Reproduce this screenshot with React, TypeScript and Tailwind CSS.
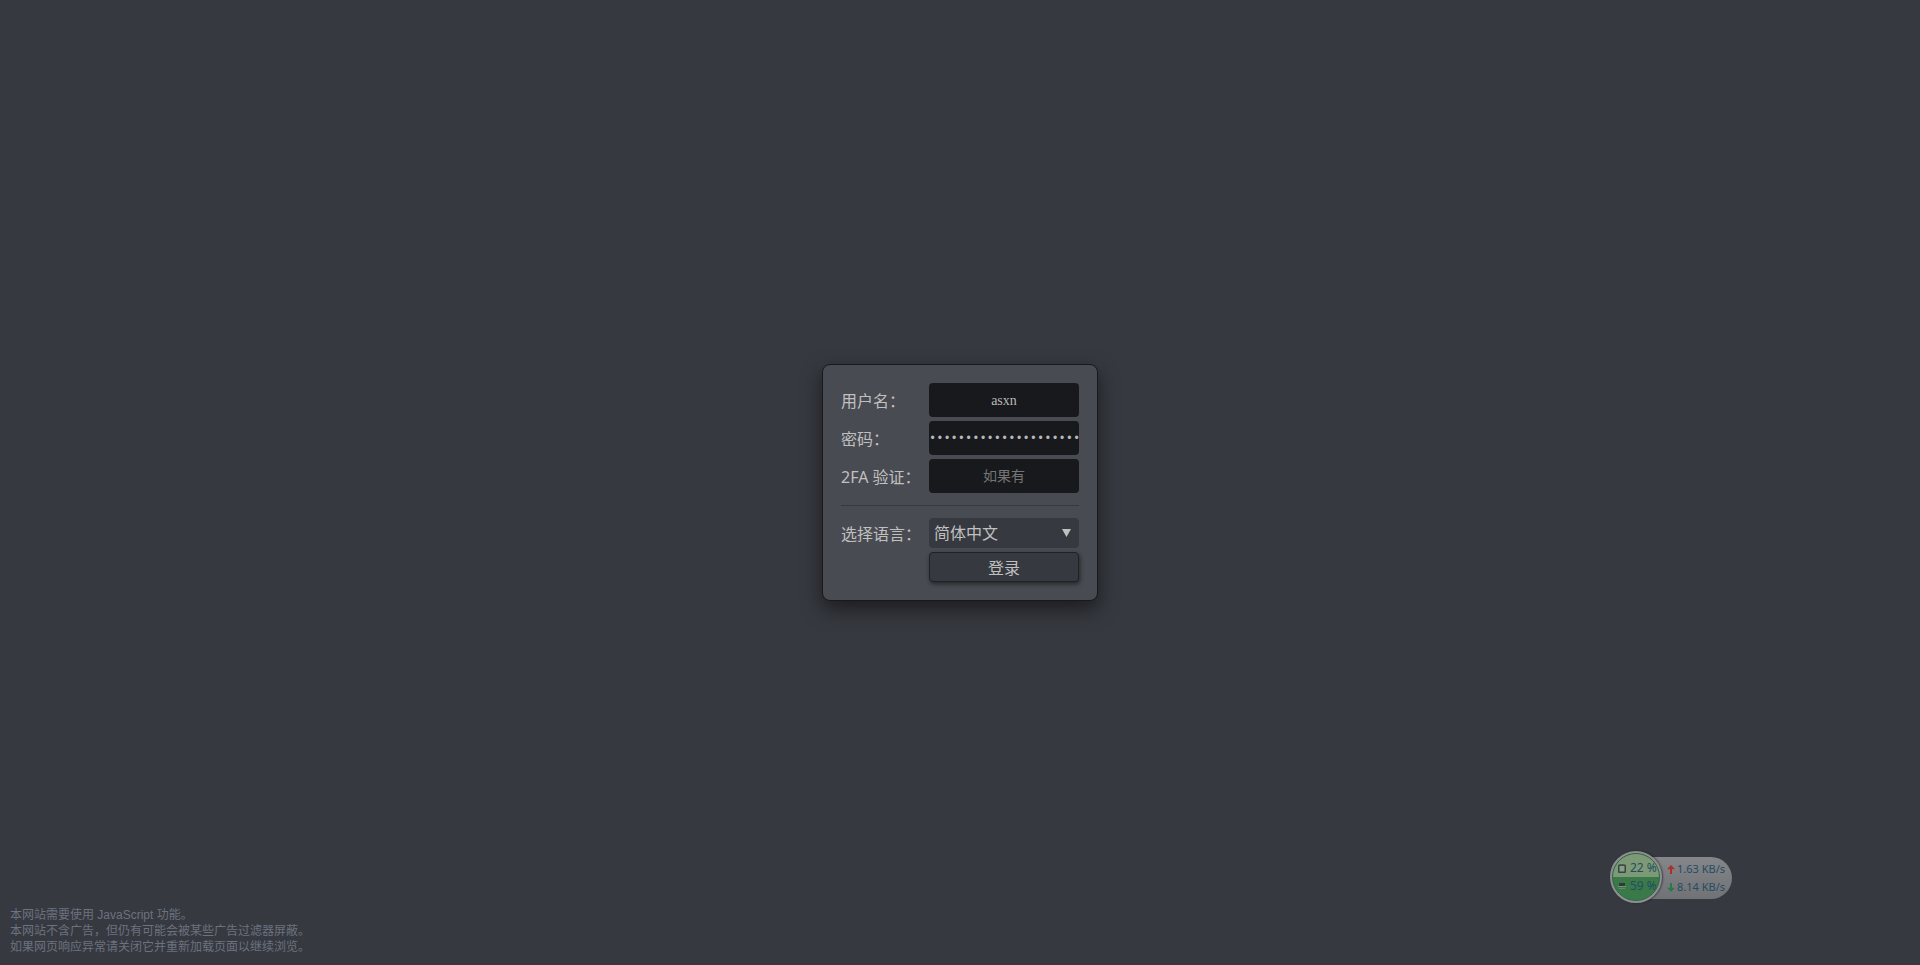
import type { ReactNode } from "react";

const NOTICES = [
  "本网站需要使用 JavaScript 功能。",
  "本网站不含广告，但仍有可能会被某些广告过滤器屏蔽。",
  "如果网页响应异常请关闭它并重新加载页面以继续浏览。",
];

const inputClass =
  "w-[150px] h-[34px] rounded bg-[#18191c] text-center text-[#b8b8b8] outline-none placeholder:text-[#757575]";

function Field({
  id,
  label,
  children,
}: {
  id: string;
  label: string;
  children: ReactNode;
}) {
  return (
    <div className="flex items-center justify-between">
      <label htmlFor={id} className="pt-0.5">
        {label}
      </label>
      {children}
    </div>
  );
}

function LoginForm() {
  return (
    <form
      onSubmit={(e) => e.preventDefault()}
      className="w-[276px] rounded-lg border border-[#18191c] bg-[#494b52] p-[18px] text-base leading-6 text-[#c0c0c0] shadow-[0_8px_20px_rgba(0,0,0,0.5)]"
    >
      <div className="flex flex-col gap-1">
        <Field id="username" label="用户名：">
          <input
            id="username"
            type="text"
            defaultValue="asxn"
            className={`${inputClass} pt-0.5 font-['Liberation_Serif','Noto_Sans_CJK_SC',serif] text-sm`}
          />
        </Field>
        <Field id="password" label="密码：">
          <input
            id="password"
            type="password"
            defaultValue="aaaaaaaaaaaaaaaaaaaaa"
            className={`${inputClass} pt-0.5 font-['Liberation_Mono',monospace] text-xs`}
          />
        </Field>
        <Field id="code" label="2FA 验证：">
          <input
            id="code"
            type="text"
            placeholder="如果有"
            className={`${inputClass} pt-0.5 font-['Liberation_Serif','Noto_Sans_CJK_SC',serif] text-sm`}
          />
        </Field>
      </div>
      <hr className="my-3 border-[#36393f]" />
      <div className="flex flex-col gap-1">
        <Field id="language" label="选择语言：">
          <div className="relative">
            <select
              id="language"
              className="h-[30px] w-[150px] appearance-none rounded bg-[#36393f] px-[5px] outline-none"
            >
              <option>简体中文</option>
            </select>
            <svg
              viewBox="0 0 9 8"
              className="pointer-events-none absolute top-[11px] right-2 h-2 w-[9px]"
              fill="currentColor"
            >
              <polygon points="0,0 9,0 4.5,8" />
            </svg>
          </div>
        </Field>
        <button
          type="submit"
          className="h-[30px] w-[150px] self-end rounded border border-[#202125] bg-[#36393f] pt-0.5 shadow-[1px_2px_4px_rgba(0,0,0,0.5)]"
        >
          登录
        </button>
      </div>
    </form>
  );
}

function Arrow({ className }: { className: string }) {
  return (
    <svg viewBox="0 0 8 9" className={className} fill="currentColor">
      <path d="M4 0 8 4.3H5V9H3V4.3H0z" />
    </svg>
  );
}

function NetMonitor() {
  return (
    <div className="absolute right-[188px] bottom-[60px] flex h-[52px] w-[122px] items-center font-['Noto_Sans',sans-serif] text-xs leading-[18px] text-[#244c62]">
      <div className="mt-0.5 ml-6 flex h-[42px] flex-1 flex-col justify-center rounded-r-full bg-linear-to-b from-[#85868a] to-[#717276] pl-[33px] text-[11px]">
        <div className="flex items-center gap-0.5 whitespace-nowrap">
          <Arrow className="h-[9px] w-2 text-[#a8322a]" />
          1.63 KB/s
        </div>
        <div className="flex items-center gap-0.5 whitespace-nowrap">
          <Arrow className="h-[9px] w-2 rotate-180 text-[#287a4c]" />
          8.14 KB/s
        </div>
      </div>
      <div className="absolute top-0 left-0 size-[52px] rounded-full border-2 border-[#8c8e90] bg-[#8f9192] shadow-[1px_0_2px_rgba(0,0,0,0.5)]">
        <div className="flex size-full flex-col justify-center overflow-hidden rounded-full border border-[#2c6747] bg-linear-to-b from-[#7d9975] from-50% to-[#3a7a48] to-50% pl-[5px]">
          <div className="flex items-center gap-1 whitespace-nowrap">
            <svg viewBox="0 0 8 9" className="h-[9px] w-2 shrink-0">
              <rect
                x="0.75"
                y="1.25"
                width="6.5"
                height="7"
                rx="0.5"
                fill="#8d9a8c"
                stroke="#2f4a40"
                strokeWidth="1.5"
              />
              <rect x="2" y="0" width="4" height="1.5" fill="#4c5a50" />
            </svg>
            22 %
          </div>
          <div className="flex items-center gap-1 whitespace-nowrap">
            <svg viewBox="0 0 8 8" className="size-2 shrink-0">
              <rect x="1" y="1" width="6" height="3" fill="#2f3a35" />
              <rect x="0" y="4" width="8" height="1" fill="#7e8f80" />
              <rect x="1" y="6" width="6" height="1" fill="#6e8571" />
            </svg>
            59 %
          </div>
        </div>
      </div>
    </div>
  );
}

export default function App() {
  return (
    <main className="relative flex min-h-screen items-center justify-center border-b-2 border-[#3c3540] bg-[#36393f] pt-0.5 font-['Noto_Sans','Noto_Sans_CJK_SC',sans-serif]">
      <LoginForm />
      <footer className="absolute bottom-2 left-[10px] font-['Liberation_Sans','Noto_Sans_CJK_SC',sans-serif] text-xs leading-4 text-[#6b7280]">
        {NOTICES.map((line) => (
          <p key={line}>{line}</p>
        ))}
      </footer>
      <NetMonitor />
    </main>
  );
}
